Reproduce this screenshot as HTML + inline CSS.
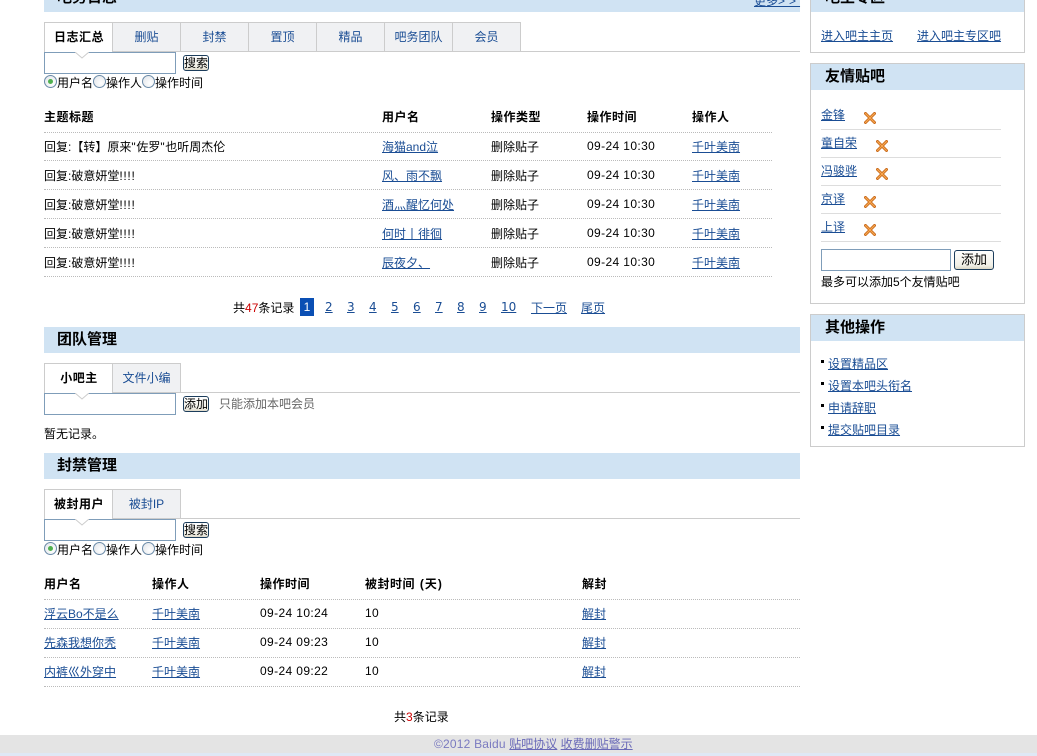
<!DOCTYPE html>
<html lang="zh-CN"><head><meta charset="utf-8"><title>吧务管理</title>
<style>
html,body{margin:0;padding:0;background:#fff}
#p{position:relative;width:1037px;height:756px;overflow:hidden;font:12px/14px "Liberation Sans","WenQuanYi Zen Hei","Noto Sans CJK SC",sans-serif;color:#000}
#p *{box-sizing:border-box}
.t{position:absolute;white-space:nowrap;line-height:14px}
a{color:#1a4d94;text-decoration:underline}
b{font-weight:bold;letter-spacing:.5px}
.v{letter-spacing:.38px}
.x{letter-spacing:.7px}
.pg{font-family:"DejaVu Sans",sans-serif;font-size:12px}
.h{position:absolute;background:#d0e3f3;height:26px}
.ht{position:absolute;font-size:15px;font-weight:bold;line-height:16px;white-space:nowrap}
.tab{position:absolute;height:30px;border:1px solid #ccc;border-left:0;background:#f0f1f3;color:#1a4d94;text-align:center;line-height:28px}
.tab.on{background:#fff;color:#000;font-weight:bold;letter-spacing:.5px;text-indent:1px;border-bottom:0;border-left:1px solid #ccc}
.l{position:absolute;height:1px;background:#ccc}
.d{position:absolute;height:0;border-top:1px dotted #bbb}
.i{position:absolute;background:#fff;border:1px solid #7f9db9;padding:0;margin:0;height:22px;width:132px;z-index:1}
.n{position:absolute;z-index:2;width:0;height:0}
.btn{position:absolute;font:12px/14px "Liberation Sans","WenQuanYi Zen Hei","Noto Sans CJK SC",sans-serif;color:#000;border:1px solid #1c3d5c;border-radius:3px;background:linear-gradient(#fff,#f0efe6 80%,#dcd8c8);padding:0;margin:0;text-align:center}
.r{position:absolute;width:13px;height:13px;border-radius:50%;border:1px solid #6a8aa8;background:radial-gradient(circle at 65% 65%,#fff,#dfe3e8)}
.r.c::after{content:"";position:absolute;left:3px;top:3px;width:5px;height:5px;border-radius:50%;background:#4fb04f}
.box{position:absolute;border:1px solid #ccc;background:#fff}
svg{position:absolute}
.red{color:#c00}
</style></head><body><div id="p">

<!-- 吧务日志 -->
<div class="h" style="left:44px;top:-14px;width:756px"></div>
<div class="ht" style="left:57px;top:-10px">吧务日志</div>
<a class="t" style="left:754px;top:-6px" href="#">更多<span style="letter-spacing:4px">&gt;&gt;</span></a>

<div class="tab on" style="left:44px;top:22px;width:69px">日志汇总</div>
<div class="tab" style="left:113px;top:22px;width:68px">删贴</div>
<div class="tab" style="left:181px;top:22px;width:68px">封禁</div>
<div class="tab" style="left:249px;top:22px;width:68px">置顶</div>
<div class="tab" style="left:317px;top:22px;width:68px">精品</div>
<div class="tab" style="left:385px;top:22px;width:68px">吧务团队</div>
<div class="tab" style="left:453px;top:22px;width:68px">会员</div>
<div class="l" style="left:113px;top:51px;width:687px"></div>
<input class="i" style="left:44px;top:52px">
<svg class="n" style="left:75px;top:52px;width:14px;height:7px;z-index:2"><path d="M0 0L7 6L14 0" fill="#fff" stroke="#ccc"/></svg>
<button class="btn" style="left:183px;top:55px;width:26px;height:16px">搜索</button>
<span class="r c" style="left:44px;top:75px"></span><span class="t" style="left:57px;top:76px">用户名</span>
<span class="r" style="left:93px;top:75px"></span><span class="t" style="left:106px;top:76px">操作人</span>
<span class="r" style="left:142px;top:75px"></span><span class="t" style="left:155px;top:76px">操作时间</span>

<b class="t" style="left:44px;top:110px">主题标题</b><b class="t" style="left:382px;top:110px">用户名</b><b class="t" style="left:491px;top:110px">操作类型</b><b class="t" style="left:587px;top:110px">操作时间</b><b class="t" style="left:692px;top:110px">操作人</b>
<div class="d" style="left:44px;top:132px;width:728px"></div>

<span class="t" style="left:44px;top:140px">回复:【转】原来<span class="x">"</span>佐罗<span class="x">"</span>也听周杰伦</span><a class="t" style="left:382px;top:140px" href="#">海猫and泣</a><span class="t" style="left:491px;top:140px">删除贴子</span><span class="t v" style="left:587px;top:139px">09-24 10:30</span><a class="t" style="left:692px;top:140px" href="#">千叶美南</a>
<div class="d" style="left:44px;top:160px;width:728px"></div>
<span class="t" style="left:44px;top:169px">回复:破意妍堂<span class="x">!!!!</span></span><a class="t" style="left:382px;top:169px" href="#">风、雨不飘</a><span class="t" style="left:491px;top:169px">删除贴子</span><span class="t v" style="left:587px;top:168px">09-24 10:30</span><a class="t" style="left:692px;top:169px" href="#">千叶美南</a>
<div class="d" style="left:44px;top:189px;width:728px"></div>
<span class="t" style="left:44px;top:198px">回复:破意妍堂<span class="x">!!!!</span></span><a class="t" style="left:382px;top:198px" href="#">酒灬醒忆何处</a><span class="t" style="left:491px;top:198px">删除贴子</span><span class="t v" style="left:587px;top:197px">09-24 10:30</span><a class="t" style="left:692px;top:198px" href="#">千叶美南</a>
<div class="d" style="left:44px;top:218px;width:728px"></div>
<span class="t" style="left:44px;top:227px">回复:破意妍堂<span class="x">!!!!</span></span><a class="t" style="left:382px;top:227px" href="#">何时丨徘徊</a><span class="t" style="left:491px;top:227px">删除贴子</span><span class="t v" style="left:587px;top:226px">09-24 10:30</span><a class="t" style="left:692px;top:227px" href="#">千叶美南</a>
<div class="d" style="left:44px;top:247px;width:728px"></div>
<span class="t" style="left:44px;top:256px">回复:破意妍堂<span class="x">!!!!</span></span><a class="t" style="left:382px;top:256px" href="#">辰夜夕、</a><span class="t" style="left:491px;top:256px">删除贴子</span><span class="t v" style="left:587px;top:255px">09-24 10:30</span><a class="t" style="left:692px;top:256px" href="#">千叶美南</a>
<div class="d" style="left:44px;top:276px;width:728px"></div>

<span class="t" style="left:233px;top:301px">共<span class="red">47</span>条记录</span>
<div class="t" style="left:300px;top:298px;width:14px;height:18px;background:#0a4fb4;color:#fff;text-align:center;line-height:18px">1</div>
<a class="t pg" style="left:325px;top:300px" href="#">2</a><a class="t pg" style="left:347px;top:300px" href="#">3</a><a class="t pg" style="left:369px;top:300px" href="#">4</a><a class="t pg" style="left:391px;top:300px" href="#">5</a><a class="t pg" style="left:413px;top:300px" href="#">6</a><a class="t pg" style="left:435px;top:300px" href="#">7</a><a class="t pg" style="left:457px;top:300px" href="#">8</a><a class="t pg" style="left:479px;top:300px" href="#">9</a><a class="t pg" style="left:501px;top:300px" href="#">10</a><a class="t" style="left:531px;top:301px" href="#">下一页</a><a class="t" style="left:581px;top:301px" href="#">尾页</a>

<!-- 团队管理 -->
<div class="h" style="left:44px;top:327px;width:756px"></div>
<div class="ht" style="left:57px;top:332px">团队管理</div>
<div class="tab on" style="left:44px;top:363px;width:69px">小吧主</div>
<div class="tab" style="left:113px;top:363px;width:68px">文件小编</div>
<div class="l" style="left:113px;top:392px;width:687px"></div>
<input class="i" style="left:44px;top:393px">
<svg class="n" style="left:75px;top:393px;width:14px;height:7px;z-index:2"><path d="M0 0L7 6L14 0" fill="#fff" stroke="#ccc"/></svg>
<button class="btn" style="left:183px;top:396px;width:26px;height:16px">添加</button>
<span class="t" style="left:219px;top:397px;color:#666">只能添加本吧会员</span>
<span class="t" style="left:44px;top:427px">暂无记录。</span>

<!-- 封禁管理 -->
<div class="h" style="left:44px;top:453px;width:756px"></div>
<div class="ht" style="left:57px;top:458px">封禁管理</div>
<div class="tab on" style="left:44px;top:489px;width:69px">被封用户</div>
<div class="tab" style="left:113px;top:489px;width:68px">被封IP</div>
<div class="l" style="left:113px;top:518px;width:687px"></div>
<input class="i" style="left:44px;top:519px">
<svg class="n" style="left:75px;top:519px;width:14px;height:7px;z-index:2"><path d="M0 0L7 6L14 0" fill="#fff" stroke="#ccc"/></svg>
<button class="btn" style="left:183px;top:522px;width:26px;height:16px">搜索</button>
<span class="r c" style="left:44px;top:542px"></span><span class="t" style="left:57px;top:543px">用户名</span>
<span class="r" style="left:93px;top:542px"></span><span class="t" style="left:106px;top:543px">操作人</span>
<span class="r" style="left:142px;top:542px"></span><span class="t" style="left:155px;top:543px">操作时间</span>

<b class="t" style="left:44px;top:577px">用户名</b><b class="t" style="left:152px;top:577px">操作人</b><b class="t" style="left:260px;top:577px">操作时间</b><b class="t" style="left:365px;top:577px;word-spacing:1px">被封时间 <span style="letter-spacing:1px">(天)</span></b><b class="t" style="left:582px;top:577px">解封</b>
<div class="d" style="left:44px;top:599px;width:756px"></div>
<a class="t" style="left:44px;top:607px" href="#">浮云Bo不是么</a><a class="t" style="left:152px;top:607px" href="#">千叶美南</a><span class="t v" style="left:260px;top:606px">09-24 10:24</span><span class="t v" style="left:365px;top:606px">10</span><a class="t" style="left:582px;top:607px" href="#">解封</a>
<div class="d" style="left:44px;top:628px;width:756px"></div>
<a class="t" style="left:44px;top:636px" href="#">先森我想你秃</a><a class="t" style="left:152px;top:636px" href="#">千叶美南</a><span class="t v" style="left:260px;top:635px">09-24 09:23</span><span class="t v" style="left:365px;top:635px">10</span><a class="t" style="left:582px;top:636px" href="#">解封</a>
<div class="d" style="left:44px;top:657px;width:756px"></div>
<a class="t" style="left:44px;top:665px" href="#">内裤巛外穿中</a><a class="t" style="left:152px;top:665px" href="#">千叶美南</a><span class="t v" style="left:260px;top:664px">09-24 09:22</span><span class="t v" style="left:365px;top:664px">10</span><a class="t" style="left:582px;top:665px" href="#">解封</a>
<div class="d" style="left:44px;top:686px;width:756px"></div>
<span class="t" style="left:394px;top:710px">共<span class="red">3</span>条记录</span>

<!-- 右栏 -->
<div class="box" style="left:810px;top:-20px;width:215px;height:73px"></div>
<div class="h" style="left:811px;top:-14px;width:213px"></div>
<div class="ht" style="left:825px;top:-10px">吧主专区</div>
<a class="t" style="left:821px;top:29px" href="#">进入吧主主页</a><a class="t" style="left:917px;top:29px" href="#">进入吧主专区吧</a>

<div class="box" style="left:810px;top:63px;width:215px;height:241px"></div>
<div class="h" style="left:811px;top:64px;width:213px;height:26px"></div>
<div class="ht" style="left:825px;top:69px">友情贴吧</div>
<a class="t" style="left:821px;top:108px" href="#">金锋</a>
<svg style="left:864px;top:112px" width="12" height="12" viewBox="0 0 12 12"><path d="M1.5 10.5L10.5 1.5M1.5 1.5L10.5 10.5" stroke="#c96a1c" stroke-width="3" stroke-linecap="round"/><path d="M1.5 10.5L10.5 1.5M1.5 1.5L10.5 10.5" stroke="#f8a850" stroke-width="1.2" stroke-linecap="round"/></svg>
<div class="l" style="left:821px;top:129px;width:180px;background:#ddd"></div>
<a class="t" style="left:821px;top:136px" href="#">童自荣</a>
<svg style="left:876px;top:140px" width="12" height="12" viewBox="0 0 12 12"><path d="M1.5 10.5L10.5 1.5M1.5 1.5L10.5 10.5" stroke="#c96a1c" stroke-width="3" stroke-linecap="round"/><path d="M1.5 10.5L10.5 1.5M1.5 1.5L10.5 10.5" stroke="#f8a850" stroke-width="1.2" stroke-linecap="round"/></svg>
<div class="l" style="left:821px;top:157px;width:180px;background:#ddd"></div>
<a class="t" style="left:821px;top:164px" href="#">冯骏骅</a>
<svg style="left:876px;top:168px" width="12" height="12" viewBox="0 0 12 12"><path d="M1.5 10.5L10.5 1.5M1.5 1.5L10.5 10.5" stroke="#c96a1c" stroke-width="3" stroke-linecap="round"/><path d="M1.5 10.5L10.5 1.5M1.5 1.5L10.5 10.5" stroke="#f8a850" stroke-width="1.2" stroke-linecap="round"/></svg>
<div class="l" style="left:821px;top:185px;width:180px;background:#ddd"></div>
<a class="t" style="left:821px;top:192px" href="#">京译</a>
<svg style="left:864px;top:196px" width="12" height="12" viewBox="0 0 12 12"><path d="M1.5 10.5L10.5 1.5M1.5 1.5L10.5 10.5" stroke="#c96a1c" stroke-width="3" stroke-linecap="round"/><path d="M1.5 10.5L10.5 1.5M1.5 1.5L10.5 10.5" stroke="#f8a850" stroke-width="1.2" stroke-linecap="round"/></svg>
<div class="l" style="left:821px;top:213px;width:180px;background:#ddd"></div>
<a class="t" style="left:821px;top:220px" href="#">上译</a>
<svg style="left:864px;top:224px" width="12" height="12" viewBox="0 0 12 12"><path d="M1.5 10.5L10.5 1.5M1.5 1.5L10.5 10.5" stroke="#c96a1c" stroke-width="3" stroke-linecap="round"/><path d="M1.5 10.5L10.5 1.5M1.5 1.5L10.5 10.5" stroke="#f8a850" stroke-width="1.2" stroke-linecap="round"/></svg>
<div class="l" style="left:821px;top:241px;width:180px;background:#ddd"></div>
<input class="i" style="left:821px;top:249px;width:130px">
<button class="btn" style="left:954px;top:250px;width:40px;height:20px;font-size:13px">添加</button>
<span class="t" style="left:821px;top:275px">最多可以添加5个友情贴吧</span>

<div class="box" style="left:810px;top:314px;width:215px;height:133px"></div>
<div class="h" style="left:811px;top:315px;width:213px;height:26px"></div>
<div class="ht" style="left:825px;top:320px">其他操作</div>
<div style="position:absolute;left:821px;top:360px;width:3px;height:3px;background:#000"></div><a class="t" style="left:828px;top:357px" href="#">设置精品区</a>
<div style="position:absolute;left:821px;top:382px;width:3px;height:3px;background:#000"></div><a class="t" style="left:828px;top:379px" href="#">设置本吧头衔名</a>
<div style="position:absolute;left:821px;top:404px;width:3px;height:3px;background:#000"></div><a class="t" style="left:828px;top:401px" href="#">申请辞职</a>
<div style="position:absolute;left:821px;top:426px;width:3px;height:3px;background:#000"></div><a class="t" style="left:828px;top:423px" href="#">提交贴吧目录</a>

<!-- 页脚 -->
<div style="position:absolute;left:0;top:735px;width:1037px;height:18px;background:#e4e4e4"></div>
<div style="position:absolute;left:0;top:753px;width:1037px;height:3px;background:#dfe8f5"></div>
<span class="t" style="left:434px;top:737px;color:#7a7ac0"><span style="letter-spacing:.2px">©2012 Baidu </span><a style="color:#6a6ab8" href="#">贴吧协议</a> <a style="color:#6a6ab8" href="#">收费删贴警示</a></span>
</div></body></html>
